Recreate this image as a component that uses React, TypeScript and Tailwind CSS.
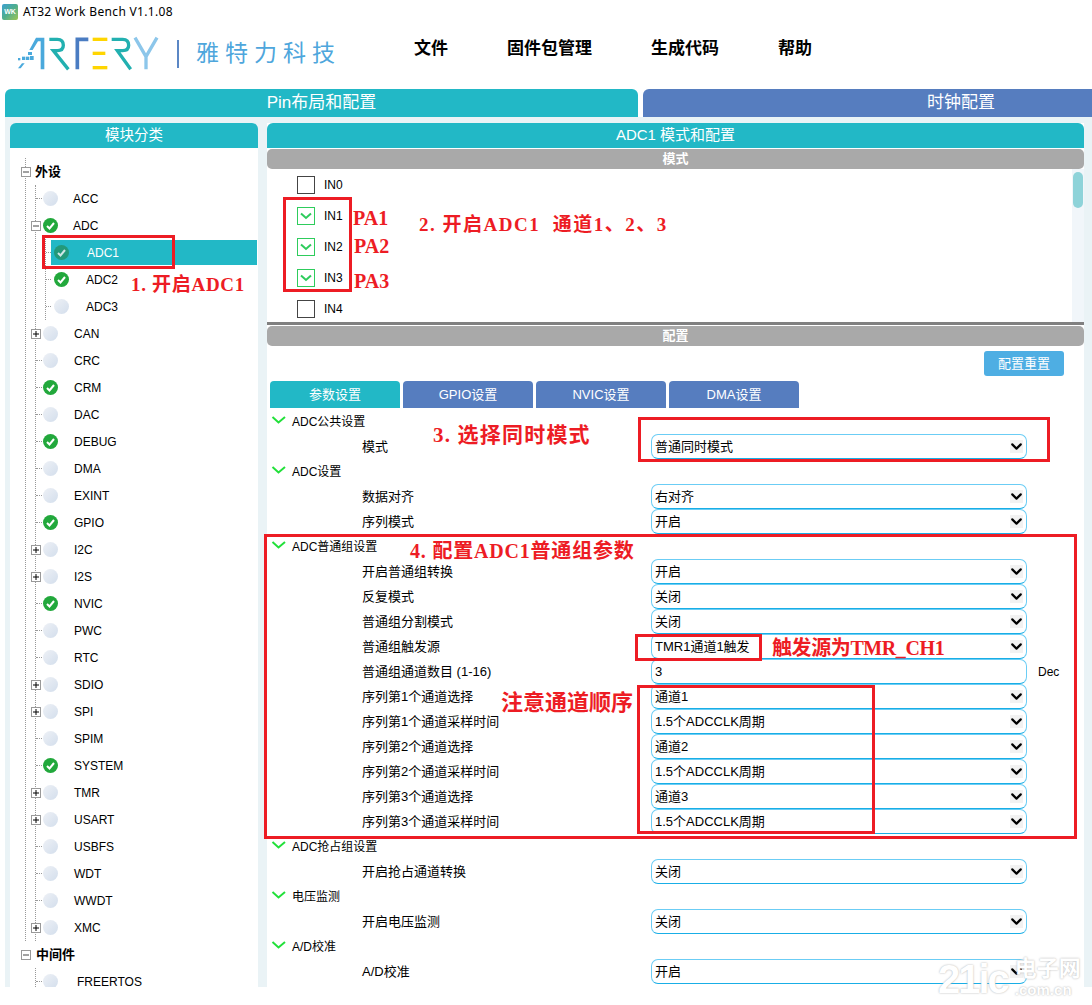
import { ChevronDown } from 'lucide-react';

type TreeItem = {
  name: string;
  on?: boolean;
  plus?: boolean;
  textClass: string;
};

const peripherals: TreeItem[] = [
  { name: 'CAN', plus: true, textClass: 'ml-[16px]' },
  { name: 'CRC', textClass: 'ml-[16px]' },
  { name: 'CRM', on: true, textClass: 'ml-[16px]' },
  { name: 'DAC', textClass: 'ml-[16px]' },
  { name: 'DEBUG', on: true, textClass: 'ml-[16px]' },
  { name: 'DMA', textClass: 'ml-[16px]' },
  { name: 'EXINT', textClass: 'ml-[16px]' },
  { name: 'GPIO', on: true, textClass: 'ml-[16px]' },
  { name: 'I2C', plus: true, textClass: 'ml-[16px]' },
  { name: 'I2S', plus: true, textClass: 'ml-[16px]' },
  { name: 'NVIC', on: true, textClass: 'ml-[16px]' },
  { name: 'PWC', textClass: 'ml-[16px]' },
  { name: 'RTC', textClass: 'ml-[16px]' },
  { name: 'SDIO', plus: true, textClass: 'ml-[16px]' },
  { name: 'SPI', plus: true, textClass: 'ml-[16px]' },
  { name: 'SPIM', textClass: 'ml-[16px]' },
  { name: 'SYSTEM', on: true, textClass: 'ml-[16px]' },
  { name: 'TMR', plus: true, textClass: 'ml-[16px]' },
  { name: 'USART', plus: true, textClass: 'ml-[16px]' },
  { name: 'USBFS', textClass: 'ml-[16px]' },
  { name: 'WDT', textClass: 'ml-[16px]' },
  { name: 'WWDT', textClass: 'ml-[16px]' },
  { name: 'XMC', plus: true, textClass: 'ml-[16px]' },
];

type ConfigRow =
  | { kind: 'section'; label: string }
  | { kind: 'select'; label: string; value: string }
  | { kind: 'input'; label: string; value: string };

const configRows: ConfigRow[] = [
  { kind: 'section', label: 'ADC公共设置' },
  { kind: 'select', label: '模式', value: '普通同时模式' },
  { kind: 'section', label: 'ADC设置' },
  { kind: 'select', label: '数据对齐', value: '右对齐' },
  { kind: 'select', label: '序列模式', value: '开启' },
  { kind: 'section', label: 'ADC普通组设置' },
  { kind: 'select', label: '开启普通组转换', value: '开启' },
  { kind: 'select', label: '反复模式', value: '关闭' },
  { kind: 'select', label: '普通组分割模式', value: '关闭' },
  { kind: 'select', label: '普通组触发源', value: 'TMR1通道1触发' },
  { kind: 'input', label: '普通组通道数目 (1-16)', value: '3' },
  { kind: 'select', label: '序列第1个通道选择', value: '通道1' },
  { kind: 'select', label: '序列第1个通道采样时间', value: '1.5个ADCCLK周期' },
  { kind: 'select', label: '序列第2个通道选择', value: '通道2' },
  { kind: 'select', label: '序列第2个通道采样时间', value: '1.5个ADCCLK周期' },
  { kind: 'select', label: '序列第3个通道选择', value: '通道3' },
  { kind: 'select', label: '序列第3个通道采样时间', value: '1.5个ADCCLK周期' },
  { kind: 'section', label: 'ADC抢占组设置' },
  { kind: 'select', label: '开启抢占通道转换', value: '关闭' },
  { kind: 'section', label: '电压监测' },
  { kind: 'select', label: '开启电压监测', value: '关闭' },
  { kind: 'section', label: 'A/D校准' },
  { kind: 'select', label: 'A/D校准', value: '开启' },
];

const channels = [
  { name: 'IN0', on: false },
  { name: 'IN1', on: true },
  { name: 'IN2', on: true },
  { name: 'IN3', on: true },
  { name: 'IN4', on: false },
];

function Logo() {
  return (
    <svg width="147" height="37" viewBox="45 105 441 111" className="shrink-0">
      <g fill="#4aa9dc">
        <rect x="54" y="174" width="7" height="7" />
        <rect x="66" y="170" width="10" height="10" />
        <rect x="78" y="170" width="10" height="10" />
        <rect x="90" y="168" width="11" height="12" />
        <rect x="84" y="156" width="12" height="9" />
        <polygon points="54,205 66,190 74,190 62,205" />
        <polygon points="88,150 108,113 133,113 133,208 122,208 122,124 114,124 98,150" />
      </g>
      <path d="M148 118 H172 Q190 118 190 136 Q190 152 172 152 H160 L205 208" fill="none" stroke="#22b0b0" strokeWidth="10" />
      <path d="M265 118 H232 V208" fill="none" stroke="#4a7cc2" strokeWidth="11" />
      <g fill="#ffd500">
        <rect x="278" y="113" width="44" height="10" />
        <rect x="278" y="155" width="38" height="10" />
        <rect x="278" y="198" width="44" height="10" />
      </g>
      <path d="M335 118 H368 Q386 118 386 136 Q386 152 368 152 H352 L392 208" fill="none" stroke="#22b0b0" strokeWidth="10" />
      <path d="M405 113 L438 170 L471 113 M438 170 V208" fill="none" stroke="#8cc6ea" strokeWidth="10" />
    </svg>
  );
}

function Expander({ plus }: { plus?: boolean }) {
  return (
    <span className="flex h-[10px] w-[10px] shrink-0 items-center justify-center border border-[#999] bg-white">
      <svg width="8" height="8" viewBox="0 0 8 8">
        <path d={plus ? 'M1 4 H7 M4 1 V7' : 'M1 4 H7'} stroke={plus ? '#000' : '#444'} strokeWidth="1" />
      </svg>
    </span>
  );
}

function StatusDot({ on, dim }: { on?: boolean; dim?: boolean }) {
  if (on) {
    return (
      <span className={dim ? 'flex h-[15px] w-[15px] shrink-0 items-center justify-center rounded-full bg-[#23997a]' : 'flex h-[15px] w-[15px] shrink-0 items-center justify-center rounded-full bg-[#22a83c]'}>
        <svg width="11" height="11" viewBox="0 0 11 11">
          <path d="M2 6 L4.5 8.5 L9 3" fill="none" stroke={dim ? '#cfe6e6' : '#fff'} strokeWidth="2" />
        </svg>
      </span>
    );
  }
  return <span className="h-[15px] w-[15px] shrink-0 rounded-full bg-linear-to-br from-[#eef1f6] to-[#d3deec]" />;
}

function PeripheralRow({ item }: { item: TreeItem }) {
  return (
    <div className="flex h-[27px] items-center text-[12px] text-black">
      {item.plus ? (
        <span className="-ml-[5px] mr-[2px]">
          <Expander plus />
        </span>
      ) : (
        <span className="mr-px w-[6px] border-t border-dotted border-[#999]" />
      )}
      <StatusDot on={item.on} />
      <span className={item.textClass}>{item.name}</span>
    </div>
  );
}

function Tree() {
  return (
    <div className="flex w-[248px] shrink-0 flex-col">
      <div className="flex h-[25px] items-center justify-center rounded-t-[6px] bg-[#22b8c6] text-[14.5px] text-white">模块分类</div>
      <div className="h-[839px] overflow-hidden bg-white pt-[10px]">
        <div className="ml-[15px] border-l border-dotted border-[#999]">
          <div className="flex h-[27px] items-center">
            <span className="-ml-[5px]">
              <Expander />
            </span>
            <span className="ml-[4px] text-[13px] font-bold text-black">外设</span>
          </div>
          <div className="ml-[9px] border-l border-dotted border-[#999]">
            <PeripheralRow item={{ name: 'ACC', textClass: 'ml-[15px]' }} />
            <div className="flex h-[27px] items-center text-[12px] text-black">
              <span className="-ml-[5px] mr-[2px]">
                <Expander />
              </span>
              <StatusDot on />
              <span className="ml-[15px]">ADC</span>
            </div>
            <div className="ml-[9px] border-l border-dotted border-[#999] text-[12px] text-black">
              <div className="flex h-[27px] items-center">
                <span className="w-[5px] border-t border-dotted border-[#999]" />
                <div className="mr-px flex h-[25px] flex-1 items-center bg-[#22b8c6] pl-[3px] text-white">
                  <StatusDot on dim />
                  <span className="ml-[18px]">ADC1</span>
                </div>
              </div>
              <div className="flex h-[27px] items-center">
                <span className="mr-[3px] w-[5px] border-t border-dotted border-[#999]" />
                <StatusDot on />
                <span className="ml-[17px]">ADC2</span>
              </div>
              <div className="flex h-[27px] items-center">
                <span className="mr-[3px] w-[5px] border-t border-dotted border-[#999]" />
                <StatusDot />
                <span className="ml-[17px]">ADC3</span>
              </div>
            </div>
            {peripherals.map((item) => (
              <PeripheralRow key={item.name} item={item} />
            ))}
          </div>
        </div>
        <div className="ml-[15px] flex h-[27px] items-center">
          <span className="-ml-[4px]">
            <Expander />
          </span>
          <span className="ml-[5px] text-[13px] font-bold text-black">中间件</span>
        </div>
        <div className="ml-[25px] border-l border-dotted border-[#999]">
          <PeripheralRow item={{ name: 'FREERTOS', textClass: 'ml-[19px]' }} />
        </div>
      </div>
    </div>
  );
}

function GreyBar({ title }: { title: string }) {
  return <div className="flex h-[20px] items-center justify-center rounded-[5px] bg-[#a9a9a9] text-[13px] font-bold text-white">{title}</div>;
}

function Field({ value, arrow }: { value: string; arrow?: boolean }) {
  return (
    <div className="flex h-[25px] w-[376px] shrink-0 items-center justify-between rounded-[7px] border border-[#6bcdf5] border-b-[#19aee6] pl-[3px] pr-[3px] text-[13px] text-black">
      <span>{value}</span>
      {arrow && (
        <span className="flex h-[13px] w-[13px] items-center justify-center bg-[#f2f2f2]">
          <ChevronDown size={17} strokeWidth={3} className="shrink-0 text-black" />
        </span>
      )}
    </div>
  );
}

function ConfigList() {
  return (
    <div className="mt-px">
      {configRows.map((row, i) =>
        row.kind === 'section' ? (
          <div key={i} className="flex h-[25px] items-center pl-[4px] text-[12px] text-black">
            <svg width="16" height="10" viewBox="0 0 16 10" className="-mt-[3px] shrink-0">
              <path d="M1.5 2 L7.5 7.5 L14 2" fill="none" stroke="#22e03a" strokeWidth="2" />
            </svg>
            <span className="ml-[5px]">{row.label}</span>
          </div>
        ) : (
          <div key={i} className="flex h-[25px] items-center pl-[95px] text-[13px] text-black">
            <span className="w-[289px] shrink-0">{row.label}</span>
            <Field value={row.value} arrow={row.kind === 'select'} />
            {row.kind === 'input' && <span className="ml-[11px] text-[12px]">Dec</span>}
          </div>
        ),
      )}
    </div>
  );
}

function Annotations() {
  const text = "absolute whitespace-nowrap font-['Liberation_Serif','Noto_Sans_CJK_SC',serif] font-bold leading-none text-[#ed1c24]";
  const box = 'absolute border-[3px] border-[#ed1c24]';
  return (
    <>
      <div className={`${box} left-[42px] top-[235px] h-[34px] w-[133px]`} />
      <div className={`${box} left-[283px] top-[197px] h-[95px] w-[69px]`} />
      <div className={`${box} left-[638px] top-[417px] h-[45px] w-[412px]`} />
      <div className={`${box} left-[264px] top-[534px] h-[305px] w-[813px]`} />
      <div className={`${box} left-[635px] top-[634px] h-[27px] w-[127px]`} />
      <div className={`${box} left-[637px] top-[685px] h-[149px] w-[238px]`} />

      <span className={`${text} left-[131px] top-[275px] text-[19px] tracking-[0.7px]`}>1. 开启ADC1</span>
      <span className={`${text} left-[353px] top-[208px] text-[20px]`}>PA1</span>
      <span className={`${text} left-[354px] top-[236px] text-[20px]`}>PA2</span>
      <span className={`${text} left-[354px] top-[271px] text-[20px]`}>PA3</span>
      <span className={`${text} left-[419px] top-[215px] text-[19px] tracking-[1.5px]`}>2. 开启ADC1 &nbsp;通道1、2、3</span>
      <span className={`${text} left-[433px] top-[425px] text-[21px] tracking-[1.2px]`}>3. 选择同时模式</span>
      <span className={`${text} left-[410px] top-[541px] text-[20px] tracking-[0.8px]`}>4. 配置ADC1普通组参数</span>
      <span className={`${text} left-[772px] top-[638px] text-[20px] tracking-[-0.4px]`}>触发源为TMR_CH1</span>
      <span className={`${text} left-[501px] top-[692px] text-[22px]`}>注意通道顺序</span>
    </>
  );
}

export default function App() {
  return (
    <div className="relative h-[1005px] w-[1092px] overflow-hidden bg-white font-['Liberation_Sans','Noto_Sans_CJK_SC',sans-serif]">
      <div className="flex h-[24px] items-center pl-[2px]">
        <span className="flex h-[16px] w-[16px] items-center justify-center rounded-[2px] bg-linear-to-br from-[#3f9fd0] via-[#4fae8c] to-[#9cc44a] text-[7px] font-bold text-white">WK</span>
        <span className="ml-[5px] font-['Noto_Sans',sans-serif] text-[12px] tracking-[0.33px] text-black">AT32 Work Bench V1.1.08</span>
      </div>

      <div className="h-[65px] pl-[15px] pt-[11px]">
        <div className="flex h-[37px] items-center">
          <Logo />
          <span className="ml-[15px] h-[28px] w-[2px] bg-[#5b87c5]" />
          <span className="ml-[17px] text-[23px] tracking-[6px] text-[#4ea6dc]">雅特力科技</span>
          <nav className="-mt-[10px] ml-[73px] flex gap-[59px] text-[17px] font-bold text-black">
            <span>文件</span>
            <span>固件包管理</span>
            <span>生成代码</span>
            <span>帮助</span>
          </nav>
        </div>
      </div>

      <div className="flex h-[28px] gap-[5px] pl-[5px] text-[17px] text-white">
        <div className="flex w-[633px] shrink-0 items-center justify-center rounded-t-[6px] bg-[#22b8c6]">Pin布局和配置</div>
        <div className="flex w-[636px] shrink-0 items-center justify-center rounded-t-[6px] bg-[#567dbf]">时钟配置</div>
      </div>

      <div className="ml-[5px] flex h-[870px] gap-[9px] bg-[#eaf3f6] pl-[5px] pt-[6px]">
        <Tree />

        <div className="flex w-[817px] shrink-0 flex-col bg-white">
          <div className="flex h-[25px] shrink-0 items-center justify-center rounded-t-[6px] bg-[#22b8c6] text-[15px] text-white">ADC1 模式和配置</div>
          <div className="mt-px">
            <GreyBar title="模式" />
          </div>
          <div className="flex h-[153px] shrink-0 overflow-hidden">
            <div className="flex-1">
              {channels.map((ch) => (
                <div key={ch.name} className="flex h-[31px] items-center pl-[30px] text-[12px] text-black">
                  {ch.on ? (
                    <span className="flex h-[18px] w-[18px] items-center justify-center border border-[#2ecc5c]">
                      <svg width="12" height="8" viewBox="0 0 12 8">
                        <path d="M1 1.5 L6 6 L11 1.5" fill="none" stroke="#2ecc5c" strokeWidth="2" />
                      </svg>
                    </span>
                  ) : (
                    <span className="h-[18px] w-[18px] border border-[#444]" />
                  )}
                  <span className="ml-[9px]">{ch.name}</span>
                </div>
              ))}
            </div>
            <div className="h-full w-[12px] shrink-0 bg-[#f1f6fa] px-px pt-[3px]">
              <div className="h-[36px] rounded-[5px] bg-[#8ed3d9]" />
            </div>
          </div>
          <div className="h-[3px] shrink-0 bg-[#808080]" />
          <div className="mt-px">
            <GreyBar title="配置" />
          </div>
          <div className="flex justify-end pr-[20px] pt-[5px]">
            <button className="h-[25px] w-[80px] rounded-[3px] bg-[#4eaee3] text-[13px] text-white">配置重置</button>
          </div>
          <div className="flex gap-[3px] pl-[3px] pt-[5px] text-[13px] text-white">
            <div className="flex h-[27px] w-[130px] items-center justify-center rounded-t-[4px] bg-[#22b8c6]">参数设置</div>
            <div className="flex h-[27px] w-[130px] items-center justify-center rounded-t-[4px] bg-[#567dbf]">GPIO设置</div>
            <div className="flex h-[27px] w-[130px] items-center justify-center rounded-t-[4px] bg-[#567dbf]">NVIC设置</div>
            <div className="flex h-[27px] w-[130px] items-center justify-center rounded-t-[4px] bg-[#567dbf]">DMA设置</div>
          </div>
          <ConfigList />
        </div>
      </div>

      <Annotations />

      <div className="absolute left-[938px] top-[957px] flex items-start whitespace-nowrap font-bold text-white [text-shadow:0_0_2px_#aaa]">
        <span className="text-[40px] leading-[44px] tracking-[-2px]">21ic</span>
        <div className="ml-[7px] flex flex-col">
          <span className="text-[22px] leading-[24px]">电子网</span>
          <span className="text-[15px] leading-[18px]">.com.cn</span>
        </div>
      </div>
    </div>
  );
}
